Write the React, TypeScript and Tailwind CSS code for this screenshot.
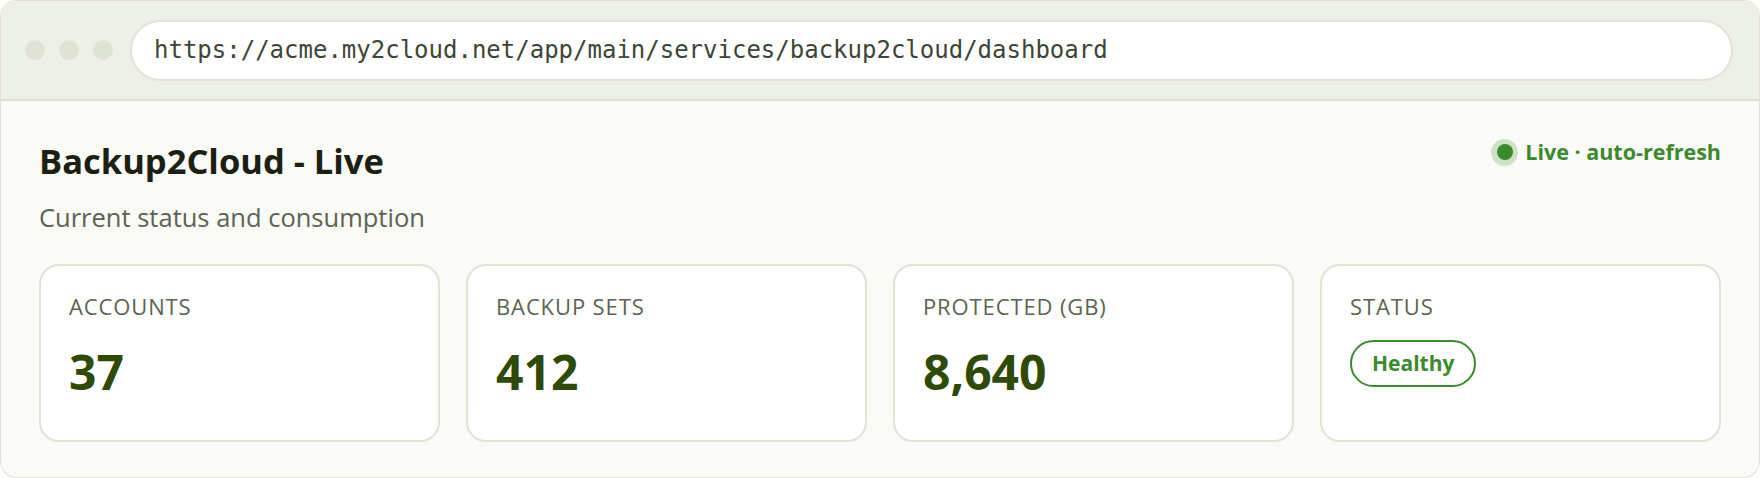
const STATS = [
  { label: "Accounts", value: "37" },
  { label: "Backup sets", value: "412" },
  { label: "Protected (GB)", value: "8,640" },
];

function StatCard({ label, children }: { label: string; children: React.ReactNode }) {
  return (
    <div className="h-[178px] rounded-[20px] border-2 border-[#e1e3d5] bg-white px-[28px] pt-[25px]">
      <p className="text-[22px] leading-[30px] tracking-[0.04em] uppercase text-[#5b6450]">{label}</p>
      {children}
    </div>
  );
}

export default function App() {
  return (
    <div className="w-[1760px] h-[478px] overflow-hidden rounded-[16px] border border-[#dfe2d3] bg-[#fafaf6] font-['Open_Sans',sans-serif]">
      <div className="flex h-[100px] items-center border-b-2 border-[#dfe2d4] bg-[#edf0e6] pl-[24px] pr-[26px]">
        <div className="flex gap-[14px]">
          <span className="size-[20px] rounded-full bg-[#dfe3d5]" />
          <span className="size-[20px] rounded-full bg-[#dfe3d5]" />
          <span className="size-[20px] rounded-full bg-[#dfe3d5]" />
        </div>
        <div className="ml-[17px] flex h-[61px] flex-1 items-center rounded-full border-2 border-[#e0e3d5] bg-white pl-[22px] font-['DejaVu_Sans_Mono',monospace] text-[24px] text-[#3c4536]">
          https://acme.my2cloud.net/app/main/services/backup2cloud/dashboard
        </div>
      </div>

      <div className="px-[38px] pt-[38px]">
        <div className="flex items-start justify-between">
          <div>
            <h1 className="text-[34.5px] leading-[44px] font-bold text-[#1c2012]">Backup2Cloud - Live</h1>
            <p className="mt-[16px] text-[25.5px] leading-[36px] text-[#5d6353]">Current status and consumption</p>
          </div>
          <div className="-mt-[1px] flex h-[28px] items-center gap-[7px]">
            <span className="flex size-[27px] items-center justify-center rounded-full bg-[#cfe2c8]">
              <span className="size-[16px] rounded-full bg-[#3b8a2e]" />
            </span>
            <span className="text-[21.5px] font-bold text-[#3b8a2c]">Live · auto-refresh</span>
          </div>
        </div>

        <div className="mt-[29px] grid grid-cols-4 gap-[26px]">
          {STATS.map((s) => (
            <StatCard key={s.label} label={s.label}>
              <p className="mt-[23px] text-[48px] leading-[56px] font-bold text-[#2f4a07]">{s.value}</p>
            </StatCard>
          ))}
          <StatCard label="Status">
            <span className="mt-[19px] inline-flex h-[47px] items-center rounded-full border-2 border-[#3b8a2e] px-[20px] text-[21px] font-bold text-[#3b8a2e]">
              Healthy
            </span>
          </StatCard>
        </div>
      </div>
    </div>
  );
}
